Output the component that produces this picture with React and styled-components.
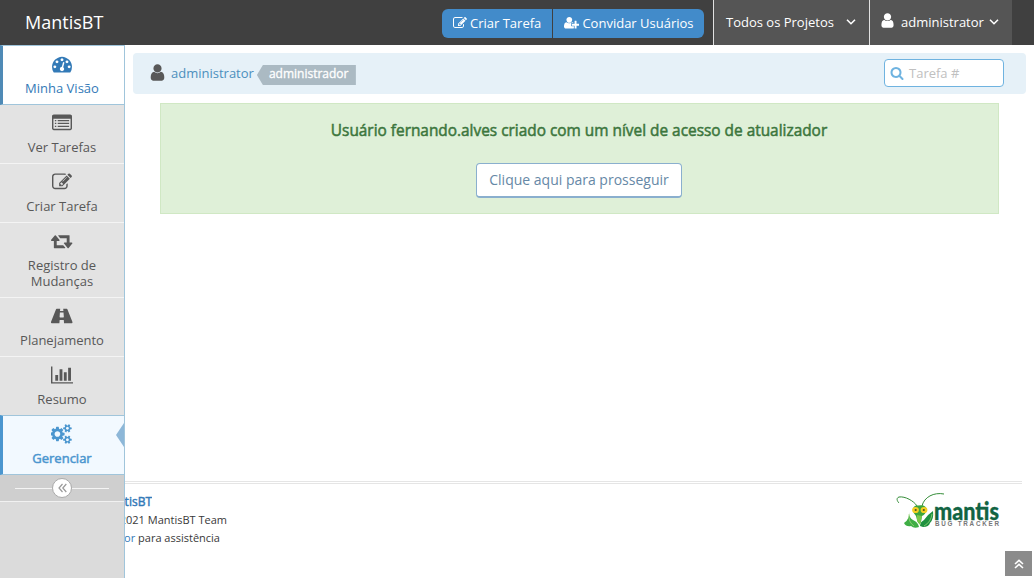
import React from "react";
import styled, { createGlobalStyle, css } from "styled-components";

const Global = createGlobalStyle`
  * { box-sizing: border-box; }
  html, body { margin: 0; height: 578px; overflow: hidden; background: #fff; }
  body { font-family: "Open Sans", "Liberation Sans", sans-serif; font-size: 13px; color: #393939; }
`;

const paths = {
  dashboard: [1792, "M384 1152q0-53-37.5-90.5t-90.5-37.5-90.5 37.5-37.5 90.5 37.5 90.5 90.5 37.5 90.5-37.5 37.5-90.5zm192-448q0-53-37.5-90.5t-90.5-37.5-90.5 37.5-37.5 90.5 37.5 90.5 90.5 37.5 90.5-37.5 37.5-90.5zm428 481l101-382q6-26-7.5-48.5t-38.5-29.5-48 6.5-30 39.5l-101 382q-60 5-107 43.5t-63 98.5q-20 77 20 146t117 89 146-20 89-117q16-60-6-117t-72-91zm660-33q0-53-37.5-90.5t-90.5-37.5-90.5 37.5-37.5 90.5 37.5 90.5 90.5 37.5 90.5-37.5 37.5-90.5zm-640-640q0-53-37.5-90.5t-90.5-37.5-90.5 37.5-37.5 90.5 37.5 90.5 90.5 37.5 90.5-37.5 37.5-90.5zm448 192q0-53-37.5-90.5t-90.5-37.5-90.5 37.5-37.5 90.5 37.5 90.5 90.5 37.5 90.5-37.5 37.5-90.5zm320 448q0 261-141 483-19 29-54 29h-1402q-35 0-54-29-141-221-141-483 0-182 71-348t191-286 286-191 348-71 348 71 286 191 191 286 71 348z"],
  list: [1792, "M160 128h1472q66 0 113 47t47 113v1088q0 66-47 113t-113 47h-1472q-66 0-113-47t-47-113v-1088q0-66 47-113t113-47zM128 512v864q0 32 32 32h1472q32 0 32-32v-864zM256 624h128v112h-128zM512 624h1024v112h-1024zM256 880h128v112h-128zM512 880h1024v112h-1024zM256 1136h128v112h-128zM512 1136h1024v112h-1024z"],
  edit: [1792, "M888 1184l116-116-152-152-116 116v56h96v96h56zm440-720q-16-16-33 1l-350 350q-17 17-1 33t33-1l350-350q17-17 1-33zm80 594v190q0 119-84.5 203.5t-203.5 84.5h-832q-119 0-203.5-84.5t-84.5-203.5v-832q0-119 84.5-203.5t203.5-84.5h832q63 0 117 25 15 7 18 23 3 17-9 29l-49 49q-14 14-32 8-23-6-45-6h-832q-66 0-113 47t-47 113v832q0 66 47 113t113 47h832q66 0 113-47t47-113v-126q0-13 9-22l64-64q15-15 35-7t20 29zm-96-738l288 288-672 672h-288v-288zm444 132l-92 92-288-288 92-92q28-28 68-28t68 28l152 152q28 28 28 68t-28 68z"],
  retweet: [1920, "M1280 1504q0 13-9.5 22.5t-22.5 9.5h-960q-8 0-13.5-2t-9-7-5.5-8-3-11.5-1-11.5v-600h-192q-26 0-45-19t-19-45q0-24 15-41l320-384q19-22 49-22t49 22l320 384q15 17 15 41 0 26-19 45t-45 19h-192v384h576q16 0 25 11l160 192q7 10 7 21zm640-416q0 24-15 41l-320 384q-20 23-49 23t-49-23l-320-384q-15-17-15-41 0-26 19-45t45-19h192v-384h-576q-16 0-25-12l-160-192q-7-9-7-20 0-13 9.5-22.5t22.5-9.5h960q8 0 13.5 2t9 7 5.5 8 3 11.5 1 11.5v600h192q26 0 45 19t19 45z"],
  road: [1920, "M512 256h313l-17 200h304l-17-200h313q48 0 70 56l437 1092q40 132-57 132h-689l-24-288h-370l-24 288h-689q-97 0-57-132l437-1092q22-56 70-56zM798 576l-28 384q-1 64 46 64h288q47 0 46-64l-28-384z"],
  chart: [2048, "M640 896v512h-256v-512h256zm384-512v1024h-256v-1024h256zm1024 1152v128h-2048v-1536h128v1408h1920zm-640-896v768h-256v-768h256zm384-384v1152h-256v-1152h256z"],
  cogs: [1920, "M832 896q0-106-75-181t-181-75-181 75-75 181 75 181 181 75 181-75 75-181zm768 512q0-52-38-90t-90-38-90 38-38 90q0 53 37.5 90.5t90.5 37.5 90.5-37.5 37.5-90.5zm0-1024q0-52-38-90t-90-38-90 38-38 90q0 53 37.5 90.5t90.5 37.5 90.5-37.5 37.5-90.5zm-384 421v185q0 10-7 19.5t-16 10.5l-155 24q-11 35-32 76 34 48 90 115 7 11 7 20 0 12-7 19-23 30-82.5 89.5t-78.5 59.5q-11 0-21-7l-115-90q-37 19-77 31-11 108-23 155-7 24-30 24h-186q-11 0-20-7.5t-10-17.5l-23-153q-34-10-75-31l-118 89q-7 7-20 7-11 0-21-8-144-133-144-160 0-9 7-19 10-14 41-53t47-61q-23-44-35-82l-152-24q-10-1-17-9.5t-7-19.5v-185q0-10 7-19.5t16-10.5l155-24q11-35 32-76-34-48-90-115-7-11-7-20 0-12 7-20 22-30 82-89t79-59q11 0 21 7l115 90q34-18 77-32 11-108 23-154 7-24 30-24h186q11 0 20 7.5t10 17.5l23 153q34 10 75 31l118-89q8-7 20-7 11 0 21 8 144 133 144 160 0 8-7 19-12 16-42 54t-45 60q23 48 34 82l152 23q10 2 17 10.5t7 19.5zm640 533v140q0 16-149 31-12 27-30 52 51 113 51 138 0 4-4 7-122 71-124 71-8 0-46-47t-52-68q-20 2-30 2t-30-2q-14 21-52 68t-46 47q-2 0-124-71-4-3-4-7 0-25 51-138-18-25-30-52-149-15-149-31v-140q0-16 149-31 13-29 30-52-51-113-51-138 0-4 4-7 4-2 35-20t59-34 30-16q8 0 46 46.5t52 67.5q20-2 30-2t30 2q51-71 92-112l6-2q4 0 124 70 4 3 4 7 0 25-51 138 17 23 30 52 149 15 149 31zm0-1024v140q0 16-149 31-12 27-30 52 51 113 51 138 0 4-4 7-122 71-124 71-8 0-46-47t-52-68q-20 2-30 2t-30-2q-14 21-52 68t-46 47q-2 0-124-71-4-3-4-7 0-25 51-138-18-25-30-52-149-15-149-31v-140q0-16 149-31 13-29 30-52-51-113-51-138 0-4 4-7 4-2 35-20t59-34 30-16q8 0 46 46.5t52 67.5q20-2 30-2t30 2q51-71 92-112l6-2q4 0 124 70 4 3 4 7 0 25-51 138 17 23 30 52 149 15 149 31z"],
  user: [1792, "M1536 1399q0 109-62.5 187t-150.5 78h-854q-88 0-150.5-78t-62.5-187q0-85 8.5-160.5t31.5-152 58.5-131 94-89 134.5-34.5q131 128 313 128t313-128q76 0 134.5 34.5t94 89 58.5 131 31.5 152 8.5 160.5zm-256-887q0 159-112.5 271.5t-271.5 112.5-271.5-112.5-112.5-271.5 112.5-271.5 271.5-112.5 271.5 112.5 112.5 271.5z"],
  userPlus: [2048, "M704 896q-159 0-271.5-112.5t-112.5-271.5 112.5-271.5 271.5-112.5 271.5 112.5 112.5 271.5-112.5 271.5-271.5 112.5zm960 128h352q13 0 22.5 9.5t9.5 22.5v192q0 13-9.5 22.5t-22.5 9.5h-352v352q0 13-9.5 22.5t-22.5 9.5h-192q-13 0-22.5-9.5t-9.5-22.5v-352h-352q-13 0-22.5-9.5t-9.5-22.5v-192q0-13 9.5-22.5t22.5-9.5h352v-352q0-13 9.5-22.5t22.5-9.5h192q13 0 22.5 9.5t9.5 22.5v352zm-736 224q0 52 38 90t90 38h256v238q-68 50-171 50h-874q-121 0-194-69t-73-190q0-53 3.5-103.5t14-109 26.5-108.5 43-97.5 62-81 85.5-53.5 111.5-20q19 0 39 17 79 61 154.5 91.5t164.5 30.5 164.5-30.5 154.5-91.5q20-17 39-17 132 0 217 96h-223q-52 0-90 38t-38 90v192z"],
  search: [1792, "M1216 832q0-185-131.5-316.5t-316.5-131.5-316.5 131.5-131.5 316.5 131.5 316.5 316.5 131.5 316.5-131.5 131.5-316.5zm512 832q0 52-38 90t-90 38q-54 0-90-38l-343-342q-179 124-399 124-143 0-273.5-55.5t-225-150-150-225-55.5-273.5 55.5-273.5 150-225 225-150 273.5-55.5 273.5 55.5 225 150 150 225 55.5 273.5q0 220-124 399l343 343q37 37 37 90z"],
};

const Glyph = styled.svg`
  display: block;
  flex: none;
  fill: currentColor;
`;

function Icon({ name, size = 14 }) {
  const [w, d] = paths[name];
  return (
    <Glyph width={(w / 1792) * size} height={size} viewBox={`0 0 ${w} 1792`}>
      <path fillRule="evenodd" d={d} />
    </Glyph>
  );
}

const Stroke = styled.svg`
  display: block;
  flex: none;
  fill: none;
  stroke: currentColor;
  stroke-width: ${(p) => p.$w || 1.6};
`;

const Page = styled.div`
  display: flex;
  flex-direction: column;
  width: 1034px;
  height: 578px;
  overflow: hidden;
`;

const Navbar = styled.header`
  display: flex;
  flex: none;
  height: 45px;
  background: #404040;
  color: #fff;
`;

const Brand = styled.div`
  flex: 1;
  padding-left: 25px;
  font-size: 18px;
  line-height: 45px;
`;

const ButtonGroup = styled.div`
  display: flex;
  gap: 1px;
  margin: 9px 9px 0 0;
  height: 29px;
  border-radius: 6px;
  overflow: hidden;
`;

const NavButton = styled.a`
  display: flex;
  align-items: center;
  gap: 3px;
  width: ${(p) => p.$width}px;
  padding: 0 0 2px 11px;
  background: #428bca;
  font-size: 13px;
  white-space: nowrap;
`;

const NavMenu = styled.div`
  display: flex;
  align-items: center;
  width: ${(p) => p.$width}px;
  padding: 0 0 2px ${(p) => p.$pad}px;
  background: #555;
  border-left: 1px solid #e1e1e1;
  white-space: nowrap;
  svg:last-child { margin-left: ${(p) => p.$caretGap}px; }
  svg:first-child { margin: -2px 5px 0 0; }
`;

const NavEnd = styled.div`
  width: 22px;
`;

const Body = styled.div`
  display: flex;
  flex: 1;
  min-height: 0;
`;

const Sidebar = styled.nav`
  flex: none;
  width: 125px;
  background: #dbdbdb;
  border-right: 1px solid #a0c5db;
`;

const active = css`
  background: ${(p) => p.$bg};
  color: ${(p) => p.$color};
  border-left: 3px solid ${(p) => p.$edge};
  border-top-color: #a0c5db;
  border-bottom: 1px solid #a0c5db;
  padding-right: 3px;
`;

const MenuItem = styled.a`
  position: relative;
  display: flex;
  flex-direction: column;
  align-items: center;
  height: ${(p) => p.$height || 59}px;
  padding-top: ${(p) => (p.$plain ? 7 : 8)}px;
  border-top: 1px solid ${(p) => (p.$plain ? "#e3e3e3" : "#f4f4f4")};
  background: #e3e3e3;
  color: #585858;
  text-align: center;
  ${(p) => p.$bg && active}
`;

const MenuText = styled.span`
  margin-top: 6px;
  line-height: 16px;
  white-space: pre-line;
  -webkit-text-stroke: ${(p) => (p.$heavy ? "0.5px" : "0")};
`;

const ActiveArrow = styled.i`
  position: absolute;
  right: 0;
  top: 7px;
  border: solid transparent;
  border-width: 12px 8px 12px 0;
  border-right-color: #8db7d8;
`;

const Toggle = styled.div`
  display: flex;
  align-items: center;
  height: 27px;
  padding: 0 15px;
  background: #cfcfcf;
  border-bottom: 1px solid #f1f1f1;
`;

const ToggleLine = styled.i`
  flex: 1;
  height: 1px;
  background: #f4f4f4;
`;

const ToggleButton = styled.span`
  display: flex;
  align-items: center;
  justify-content: center;
  width: 20px;
  height: 20px;
  border: 1px solid #aaa;
  border-radius: 50%;
  background: #fff;
  color: #999;
`;

const Main = styled.main`
  display: flex;
  flex: 1;
  flex-direction: column;
  min-width: 0;
`;

const Breadcrumbs = styled.div`
  display: flex;
  align-items: center;
  height: 41px;
  margin: 8px 8px 0;
  padding: 0 22px 2px 15px;
  border-radius: 4px;
  background: #e6f1f8;
  color: #585858;
`;

const UserLink = styled.a`
  margin: 0 3px 0 4px;
  color: #4c8fbd;
`;

const Label = styled.span`
  width: 99px;
  height: 20px;
  margin: 5px auto 0 0;
  padding-left: 12px;
  background: #abbac3;
  clip-path: polygon(0 50%, 6px 0, 100% 0, 100% 100%, 6px 100%);
  color: #fff;
  font-size: 12px;
  line-height: 18px;
  -webkit-text-stroke: 0.3px;
`;

const SearchBox = styled.div`
  display: flex;
  align-items: center;
  gap: 5px;
  width: 120px;
  height: 28px;
  padding-left: 5px;
  border: 1px solid #6fb3e0;
  border-radius: 4px;
  background: #fff;
  color: #6fb3e0;
  span { color: #c0c0c0; }
`;

const Alert = styled.section`
  display: flex;
  flex-direction: column;
  align-items: center;
  height: 111px;
  margin: 9px 35px 0;
  padding: 16px 1px 0 0;
  border: 1px solid #d0e8c4;
  background: #dff0d8;
`;

const Message = styled.p`
  margin: 0;
  color: #3c763d;
  font-size: 15.4px;
  line-height: 22px;
  -webkit-text-stroke: 0.5px;
`;

const Proceed = styled.a`
  width: 206px;
  height: 35px;
  margin-top: 21px;
  border: 1px solid #8aafce;
  border-bottom-width: 2px;
  border-radius: 4px;
  background: #fff;
  color: #6688a6;
  font-size: 14px;
  line-height: 32px;
  text-align: center;
`;

const Footer = styled.footer`
  display: flex;
  justify-content: space-between;
  height: 97px;
  margin: auto 12px 0 0;
  padding-right: 22px;
  border-top: 3px double #e5e5e5;
`;

const Credits = styled.div`
  padding-top: 9px;
  font-size: 11px;
  line-height: 18px;
`;

const CreditLine = styled.div`
  display: flex;
  justify-content: flex-end;
  width: ${(p) => p.$width}px;
  overflow: hidden;
  white-space: pre;
  font-size: ${(p) => p.$size || 11}px;
  a { color: #337ab7; -webkit-text-stroke: ${(p) => (p.$size ? "0.45px" : "0")}; }
`;

const Logo = styled.svg`
  display: block;
  margin-top: 8px;
  overflow: visible;
`;

const ScrollUp = styled.a`
  position: fixed;
  right: 2px;
  bottom: 2px;
  display: flex;
  align-items: center;
  justify-content: center;
  width: 27px;
  height: 25px;
  background: #8b8b8b;
  color: #fff;
`;

const Caret = () => (
  <Stroke width="10" height="6" viewBox="0 0 10 6">
    <path d="M1 .8L5 4.7 9 .8" />
  </Stroke>
);

const items = [
  { icon: "dashboard", text: "Minha Visão", $bg: "#fff", $color: "#337ab7", $edge: "#4f8ab6", $height: 60 },
  { icon: "list", text: "Ver Tarefas", $height: 58, $plain: true },
  { icon: "edit", text: "Criar Tarefa" },
  { icon: "retweet", text: "Registro de\nMudanças", $height: 75 },
  { icon: "road", text: "Planejamento" },
  { icon: "chart", text: "Resumo" },
  { icon: "cogs", text: "Gerenciar", $bg: "#f2f9ff", $color: "#4b96cf", $edge: "#4b96cf", $height: 60, current: true },
];

function MantisLogo() {
  return (
    <Logo width="104" height="38" viewBox="0 0 104 38">
      <g fill="none" stroke="#348d38" strokeWidth="1">
        <path d="M21 14C18 9 9 4 3 5C0 6 1 9 3 11" />
        <path d="M26 14C28 5 38 0 48 2" />
      </g>
      <path fill="#3da63c" d="M17 18Q17 13 22 13.5Q30 12 31 18Q29 23 26 24L25 30Q23 34 21 28L20 24Q17 21 17 18Z" />
      <path fill="#3fae45" d="M13 20Q13 26 17 28Q22 30 23 35Q18 37 15 34Q10 35 8 31Q14 27 13 20Z" />
      <path fill="#1f9140" d="M37 19Q38 27 34 31Q33 35 27 35L24 34Q24 30 28 28Q31 23 37 19Z" />
      <path d="M13 22Q12 30 18 34M36 22Q35 30 28 34" fill="none" stroke="#a8db80" strokeWidth="0.7" />
      <path fill="#78c84a" d="M21 23L26 24 24 33 21 29Z" />
      <ellipse cx="19.5" cy="18" rx="3.4" ry="3.1" fill="#f3ce23" />
      <ellipse cx="28" cy="18" rx="3.4" ry="3.1" fill="#f3ce23" />
      <circle cx="19.7" cy="18" r="1.1" fill="#51551e" />
      <circle cx="27.8" cy="18" r="1.1" fill="#51551e" />
      <text x="38" y="28" textLength="65" lengthAdjust="spacingAndGlyphs" fill="#116443" stroke="#116443" strokeWidth="0.3" fontFamily="Lato" fontWeight="900" fontSize="24">mantis</text>
      <text x="39" y="34" textLength="64" fill="#777" fontFamily="Liberation Sans" fontWeight="700" fontSize="6.3">BUG TRACKER</text>
    </Logo>
  );
}

export default function App() {
  return (
    <Page>
      <Global />
      <Navbar>
        <Brand>MantisBT</Brand>
        <ButtonGroup>
          <NavButton $width={110}><Icon name="edit" size={14} />Criar Tarefa</NavButton>
          <NavButton $width={151}><Icon name="userPlus" size={13.5} />Convidar Usuários</NavButton>
        </ButtonGroup>
        <NavMenu $width={156} $pad={12} $caretGap={12}>
          <span>Todos os Projetos</span>
          <Caret />
        </NavMenu>
        <NavMenu $width={143} $pad={9} $caretGap={5}>
          <Icon name="user" size={17} />
          <span>administrator</span>
          <Caret />
        </NavMenu>
        <NavEnd />
      </Navbar>
      <Body>
        <Sidebar>
          {items.map(({ icon, text, current, ...look }) => (
            <MenuItem key={icon} {...look}>
              <Icon name={icon} size={20} />
              <MenuText $heavy={current}>{text}</MenuText>
              {current && <ActiveArrow />}
            </MenuItem>
          ))}
          <Toggle>
            <ToggleLine />
            <ToggleButton>
              <Stroke width="9" height="10" viewBox="0 0 9 10" $w={1.2}>
                <path d="M4.5 1L1 5l3.5 4M8.3 1L4.8 5l3.5 4" />
              </Stroke>
            </ToggleButton>
            <ToggleLine />
          </Toggle>
        </Sidebar>
        <Main>
          <Breadcrumbs>
            <Icon name="user" size={19} />
            <UserLink>administrator</UserLink>
            <Label>administrador</Label>
            <SearchBox>
              <Icon name="search" size={14} />
              <span>Tarefa #</span>
            </SearchBox>
          </Breadcrumbs>
          <Alert>
            <Message>Usuário fernando.alves criado com um nível de acesso de atualizador</Message>
            <Proceed>Clique aqui para prosseguir</Proceed>
          </Alert>
          <Footer>
            <Credits>
              <CreditLine $width={27} $size={12}><a>tisBT</a></CreditLine>
              <CreditLine $width={102}>2021 MantisBT Team</CreditLine>
              <CreditLine $width={95}><a>or</a> para assistência</CreditLine>
            </Credits>
            <MantisLogo />
          </Footer>
        </Main>
      </Body>
      <ScrollUp>
        <Stroke width="10" height="10" viewBox="0 0 10 10">
          <path d="M1 5l4-3.6L9 5M1 9l4-3.6L9 9" />
        </Stroke>
      </ScrollUp>
    </Page>
  );
}
